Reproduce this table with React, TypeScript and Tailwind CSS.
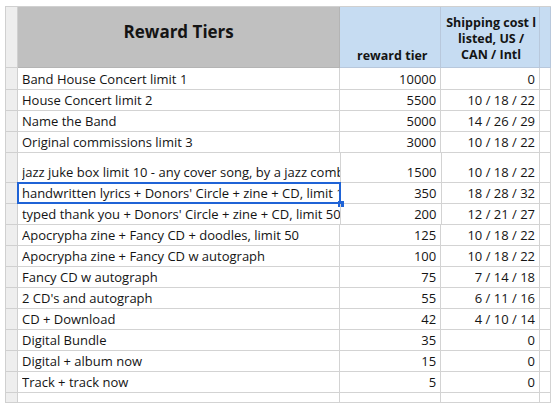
import React from "react";

type Row = { name: string; tier: string; ship: string; h: string; selected?: boolean };

const rows: Row[] = [
  { name: "Band House Concert limit 1", tier: "10000", ship: "0", h: "h-[22px]" },
  { name: "House Concert limit 2", tier: "5500", ship: "10 / 18 / 22", h: "h-[21px]" },
  { name: "Name the Band", tier: "5000", ship: "14 / 26 / 29", h: "h-[21px]" },
  { name: "Original commissions limit 3", tier: "3000", ship: "10 / 18 / 22", h: "h-[21px]" },
  { name: "jazz juke box limit 10 - any cover song, by a jazz combo", tier: "1500", ship: "10 / 18 / 22", h: "h-[30px]" },
  { name: "handwritten lyrics + Donors' Circle + zine + CD, limit 10", tier: "350", ship: "18 / 28 / 32", h: "h-[21px]", selected: true },
  { name: "typed thank you + Donors' Circle + zine + CD, limit 50", tier: "200", ship: "12 / 21 / 27", h: "h-[21px]" },
  { name: "Apocrypha zine + Fancy CD + doodles, limit 50", tier: "125", ship: "10 / 18 / 22", h: "h-[21px]" },
  { name: "Apocrypha zine + Fancy CD w autograph", tier: "100", ship: "10 / 18 / 22", h: "h-[21px]" },
  { name: "Fancy CD w autograph", tier: "75", ship: "7 / 14 / 18", h: "h-[21px]" },
  { name: "2 CD's and autograph", tier: "55", ship: "6 / 11 / 16", h: "h-[21px]" },
  { name: "CD + Download", tier: "42", ship: "4 / 10 / 14", h: "h-[21px]" },
  { name: "Digital Bundle", tier: "35", ship: "0", h: "h-[21px]" },
  { name: "Digital + album now", tier: "15", ship: "0", h: "h-[21px]" },
  { name: "Track + track now", tier: "5", ship: "0", h: "h-[21px]" },
];

const cell = "border-r border-b border-[#d3d3d3] flex items-end pb-[1px] leading-[17px]";

export default function App() {
  return (
    <div
      className="w-[559px] h-[406px] overflow-hidden bg-white pt-[6px] pl-[5px] text-[#141414]"
      style={{ fontFamily: '"Open Sans", "DejaVu Sans", sans-serif' }}
    >
      <div className="w-[546px] border-l border-t border-[#d0d0d0] flex flex-col text-[13px]">
        {/* header */}
        <div className="flex h-[61px]">
          <div className="w-[12px] bg-[#eeeeee] border-r border-b border-[#d0d0d0]" />
          <div className="w-[323px] bg-[#c0c0c0] border-r border-b border-[#b4b4b4] flex items-center justify-center font-bold text-[17px] pb-[10px]">
            Reward Tiers
          </div>
          <div className="w-[101px] bg-[#c6dcf2] border-r border-b border-[#b8c8dc] flex items-end justify-center pb-[3px] pl-[4px] font-bold text-[12.5px] leading-[16px]">
            reward tier
          </div>
          <div className="w-[99px] bg-[#c6dcf2] border-r border-b border-[#b8c8dc] flex items-end justify-center pb-[4px] pl-[2px] font-bold text-[12.5px] leading-[16px] text-center">
            Shipping cost l<br />listed, US /<br />CAN / Intl
          </div>
          <div className="w-[11px] bg-[#c6dcf2] border-r border-b border-[#b8c8dc]" />
        </div>
        {rows.map((r, i) => (
          <div key={i} className={`flex ${r.h}`}>
            <div className="w-[12px] bg-[#eeeeee] border-r border-b border-[#d0d0d0]" />
            <div className={`w-[323px] ${cell} relative pl-[4px] overflow-visible`}>
              <span className="whitespace-nowrap overflow-hidden block w-full">{r.name}</span>
              {r.selected && (
                <>
                  <div className="absolute left-[-1px] top-[-1px] right-[-1px] bottom-[-1px] border-2 border-[#1f63d6] pointer-events-none" />
                  <div className="absolute right-[-4px] bottom-[-4px] w-[6px] h-[6px] bg-[#1f63d6]" />
                </>
              )}
            </div>
            <div className={`w-[101px] ${cell} justify-end pr-[4px]`}>{r.tier}</div>
            <div className={`w-[99px] ${cell} justify-end pr-[4px]`}>{r.ship}</div>
            <div className="w-[11px] border-r border-b border-[#d3d3d3]" />
          </div>
        ))}
        <div className="flex h-[10px]">
          <div className="w-[12px] bg-[#eeeeee] border-r border-b border-[#d0d0d0]" />
          <div className="w-[323px] border-r border-b border-[#d3d3d3]" />
          <div className="w-[101px] border-r border-b border-[#d3d3d3]" />
          <div className="w-[99px] border-r border-b border-[#d3d3d3]" />
          <div className="w-[11px] border-r border-b border-[#d3d3d3]" />
        </div>
      </div>
    </div>
  );
}
